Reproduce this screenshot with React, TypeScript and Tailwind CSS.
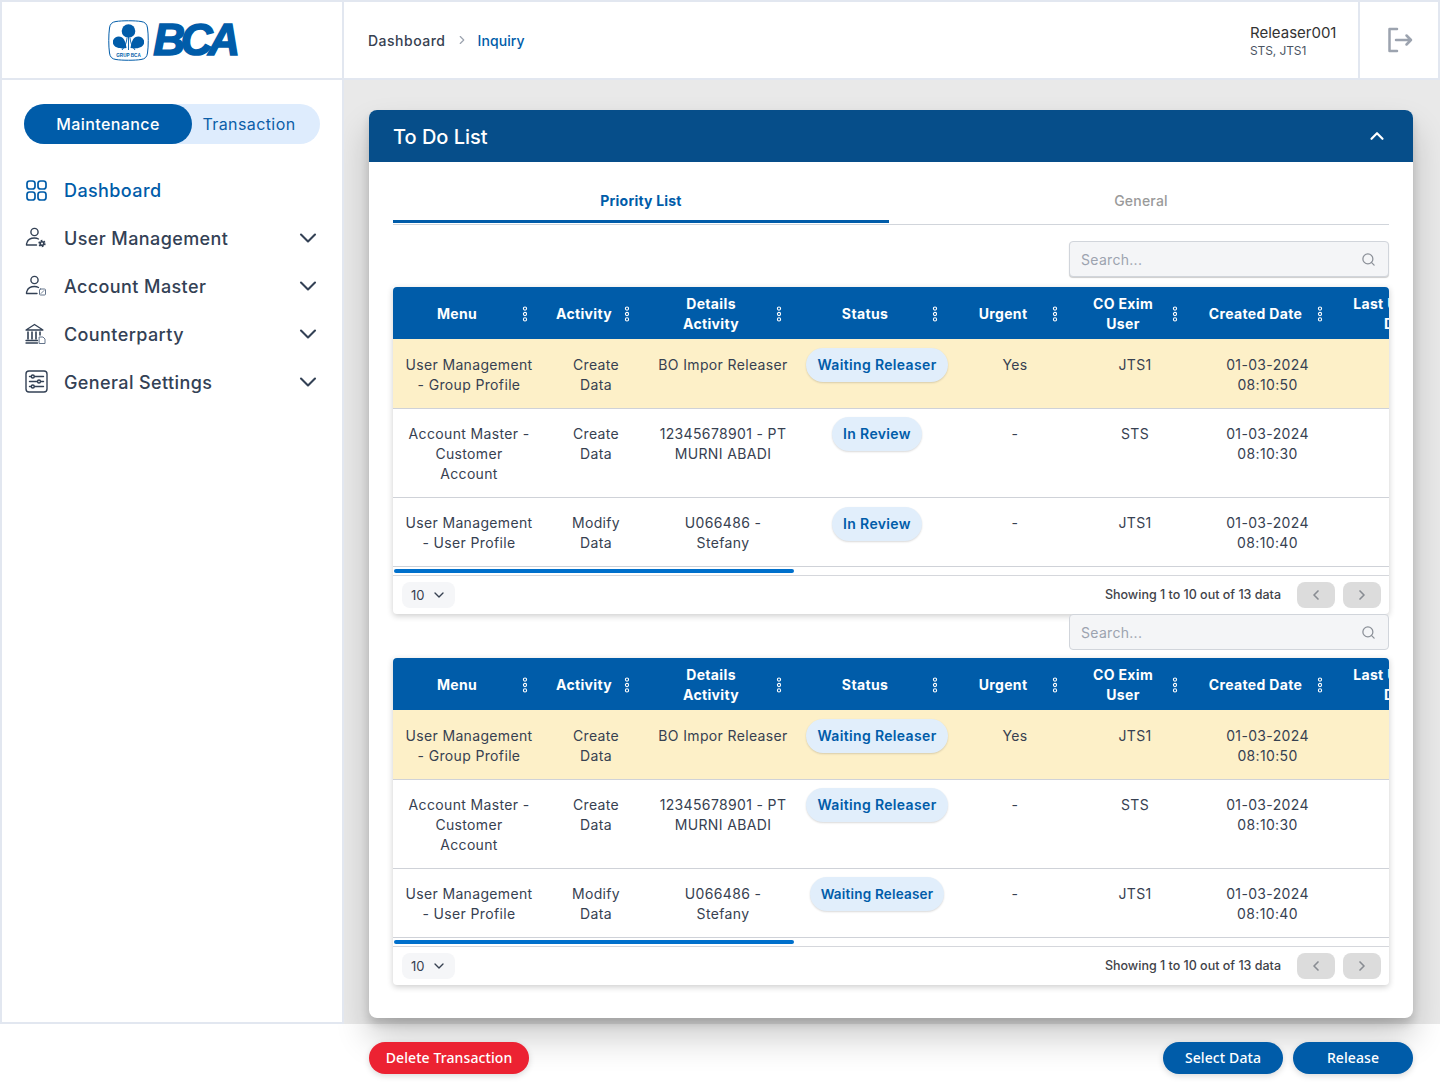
import { ChevronDown, ChevronLeft, ChevronRight, ChevronUp, Search } from "lucide-react";

const navItems = [
  { label: "User Management", icon: "user" },
  { label: "Account Master", icon: "account" },
  { label: "Counterparty", icon: "bank" },
  { label: "General Settings", icon: "settings" },
];

const columns = [
  { label: "Menu", width: "w-[152px]", inset: "" },
  { label: "Activity", width: "w-[102px]", inset: "" },
  { label: "Details Activity", width: "w-[152px]", inset: "px-6" },
  { label: "Status", width: "w-[156px]", inset: "" },
  { label: "Urgent", width: "w-[120px]", inset: "" },
  { label: "CO Exim User", width: "w-[120px]", inset: "" },
  { label: "Created Date", width: "w-[145px]", inset: "" },
  { label: "Last Updated Date", width: "w-[145px]", inset: "" },
];

const priorityRows = [
  { menu: "User Management - Group Profile", activity: "Create Data", details: "BO Impor Releaser", status: "Waiting Releaser", urgent: "Yes", user: "JTS1", date: "01-03-2024 08:10:50", highlight: true, tight: false },
  { menu: "Account Master - Customer Account", activity: "Create Data", details: "12345678901 - PT MURNI ABADI", status: "In Review", urgent: "-", user: "STS", date: "01-03-2024 08:10:30", highlight: false, tight: false },
  { menu: "User Management - User Profile", activity: "Modify Data", details: "U066486 - Stefany", status: "In Review", urgent: "-", user: "JTS1", date: "01-03-2024 08:10:40", highlight: false, tight: false },
];

const waitingRows = priorityRows.map((row, i) => ({ ...row, status: "Waiting Releaser", tight: i === 2 }));

function Logo() {
  return (
    <div className="flex items-center gap-[4px]">
      <svg width="41" height="41" viewBox="0 0 41 41" fill="none">
        <path d="M8 1.5 C14 0.5 27 0.5 33 1.5 C37 2 39 4 39.5 8 C40.5 15 40.5 26 39.5 33 C39 37 37 39 33 39.5 C27 40.5 14 40.5 8 39.5 C4 39 2 37 1.5 33 C0.5 26 0.5 15 1.5 8 C2 4 4 2 8 1.5 Z" stroke="#005ca9" strokeWidth="1" />
        <circle cx="20.5" cy="11" r="6.8" fill="#005ca9" />
        <path d="M5 20.5 C7 15 14 15.5 16 19.5 C17.5 22 18 25 18.5 28 C14 29 6.5 28.5 5 23.5 Z" fill="#005ca9" />
        <path d="M36 20.5 C34 15 27 15.5 25 19.5 C23.5 22 23 25 22.5 28 C27 29 34.5 28.5 36 23.5 Z" fill="#005ca9" />
        <path d="M20.5 17 V30 M19 18 C18.5 22 17.5 26 14 30 M22 18 C22.5 22 23.5 26 27 30" stroke="#005ca9" strokeWidth="0.9" />
        <text x="20.5" y="36.5" textAnchor="middle" fontSize="4.6" fontWeight="700" fill="#005ca9" fontFamily="'Liberation Sans', sans-serif">GRUP BCA</text>
      </svg>
      <span className="font-['Liberation_Sans',sans-serif] text-[44px] font-bold italic leading-none tracking-[-4.2px] text-[#005ca9] [-webkit-text-stroke:1.6px_#005ca9]">
        BCA
      </span>
    </div>
  );
}

function NavIcon({ name }: { name: string }) {
  if (name === "user") {
    return (
      <svg width="24" height="24" viewBox="0 0 24 24" fill="none" stroke="#334155" strokeWidth="1.4" strokeLinecap="round">
        <circle cx="9.5" cy="6" r="3.6" />
        <path d="M1.5 19 C1.5 18.5 1.5 17.5 2 16.5 C3 13.5 6.5 12 9.5 12 C11 12 12.5 12.4 13.5 13 M1.5 19 H11.5" />
        <circle cx="17" cy="17.5" r="2.6" fill="#334155" strokeWidth="2.2" strokeDasharray="1.5 1.2" strokeLinecap="butt" />
        <circle cx="17" cy="17.5" r="1" fill="#fff" stroke="none" />
      </svg>
    );
  }
  if (name === "account") {
    return (
      <svg width="24" height="24" viewBox="0 0 24 24" fill="none" stroke="#334155" strokeWidth="1.4" strokeLinecap="round">
        <circle cx="9.5" cy="6" r="3.6" />
        <path d="M1.5 19.5 C1.5 19 1.5 18 2 17 C3 14 6.5 12.5 9.5 12.5 C11 12.5 12.5 12.9 13.5 13.5 M1.5 19.5 H12" />
        <rect x="14.5" y="15" width="6" height="6" rx="1" strokeWidth="1" stroke="#64748b" />
        <path d="M16 19.5 L19 16.5" strokeWidth="0.9" stroke="#64748b" />
      </svg>
    );
  }
  if (name === "bank") {
    return (
      <svg width="24" height="24" viewBox="0 0 24 24" fill="none" stroke="#334155" strokeWidth="1.3" strokeLinecap="round" strokeLinejoin="round">
        <path d="M1 8 L9.5 2.5 L18 8 Z" />
        <path d="M3 10 V17 M7 10 V17 M11 10 V17 M15 10 V13" strokeWidth="1.6" />
        <path d="M1 18.5 H12.5 M1 21 H12.5" />
        <path d="M14.5 15 H18 L20 17 V21.5 H14.5 Z" strokeWidth="1" stroke="#64748b" />
      </svg>
    );
  }
  return (
    <svg width="24" height="24" viewBox="0 0 24 24" fill="none" stroke="#334155" strokeWidth="1.4" strokeLinecap="round">
      <rect x="1" y="1" width="21" height="21" rx="3" />
      <path d="M4.5 6.5 H6 M9.5 6.5 H18.5 M4.5 11.5 H12 M16 11.5 H18.5 M4.5 16.5 H6 M9.5 16.5 H18.5" />
      <circle cx="7.8" cy="6.5" r="1.5" />
      <circle cx="14" cy="11.5" r="1.5" />
      <circle cx="7.8" cy="16.5" r="1.5" />
    </svg>
  );
}

function Dots() {
  return (
    <svg width="8" height="16" viewBox="0 0 8 16" fill="none" stroke="#fff" strokeWidth="1.1" className="shrink-0">
      <circle cx="4" cy="2.6" r="1.6" />
      <circle cx="4" cy="8" r="1.6" />
      <circle cx="4" cy="13.4" r="1.6" />
    </svg>
  );
}

function SearchBox({ raised }: { raised?: boolean }) {
  return (
    <div className={`flex h-9 w-[320px] items-center justify-between rounded border border-[#d1d5db] bg-[#f4f5f7] pl-[11px] pr-3 pt-px text-[14px] tracking-[0.3px] text-[#9ca3af] ${raised ? "shadow-[0_1px_1px_rgba(0,0,0,0.2)]" : ""}`}>
      Search...
      <Search size={15} strokeWidth={2} className="text-[#8b9098]" />
    </div>
  );
}

function DataTable({ rows }: { rows: typeof priorityRows }) {
  return (
    <div className="w-[996px] rounded-b bg-white shadow-[0_2px_6px_rgba(0,0,0,0.2)]">
      <div className="overflow-hidden rounded-t">
        <table className="w-[1092px] table-fixed border-collapse text-center text-[14px] leading-5 tracking-[0.35px] text-[#374151]">
          <thead>
            <tr className="h-[52px] bg-[#005ca9] text-white">
              {columns.map((col) => (
                <th key={col.label} className={`${col.width} p-0 pt-[2px] font-bold`}>
                  <div className="flex items-center pr-4">
                    <span className={`flex-1 text-center ${col.inset}`}>{col.label}</span>
                    <Dots />
                  </div>
                </th>
              ))}
            </tr>
          </thead>
          <tbody>
            {rows.map((row, i) => (
              <tr key={row.menu} className={`border-b border-[#cfd2d8] align-top ${row.highlight ? "bg-[#fdf0c8]" : ""}`}>
                <td className={`px-3 pb-[13px] ${i === 0 ? "pt-4" : "pt-[15px]"}`}>{row.menu}</td>
                <td className={`px-6 pb-[13px] ${i === 0 ? "pt-4" : "pt-[15px]"}`}>{row.activity}</td>
                <td className={`px-[11px] pb-[13px] ${i === 0 ? "pt-4" : "pt-[15px]"}`}>{row.details}</td>
                <td className={i === 1 || row.tight ? "pt-2" : "pt-[9px]"}>
                  <span className={`inline-block h-[34px] rounded-full bg-[#e1eefb] font-semibold leading-[34px] text-[#005ca9] shadow-[0_1px_2px_rgba(0,0,0,0.15)] ${row.tight ? "px-[11px] text-[13.5px] tracking-[0.2px]" : "px-[11px]"}`}>
                    {row.status}
                  </span>
                </td>
                <td className={i === 0 ? "pt-4" : "pt-[15px]"}>{row.urgent}</td>
                <td className={i === 0 ? "pt-4" : "pt-[15px]"}>{row.user}</td>
                <td className={`px-6 ${i === 0 ? "pt-4" : "pt-[15px]"}`}>{row.date}</td>
                <td />
              </tr>
            ))}
          </tbody>
        </table>
      </div>
      <div className="h-[9px] border-b border-[#d5d7dc] pl-px pt-[2px]">
        <div className="h-1 w-[400px] rounded-full bg-[#0070cc]" />
      </div>
      <div className="flex h-[38px] items-start justify-between pl-[9px] pr-2 pt-[6px]">
        <div className="flex h-[26px] w-[53px] items-center gap-[6px] rounded-lg bg-[#f5f6f8] pl-[9px] text-[13px] text-[#374151]">
          <span className="pt-px">10</span>
          <ChevronDown size={16} />
        </div>
        <div className="flex items-center">
          <span className="mr-4 pt-px text-[12.5px] font-medium text-[#3f4349]">Showing 1 to 10 out of 13 data</span>
          <div className="flex h-[26px] w-[38px] items-center justify-center rounded-lg bg-[#dcdcdc] text-[#888c92]">
            <ChevronLeft size={16} strokeWidth={2.5} />
          </div>
          <div className="ml-2 flex h-[26px] w-[38px] items-center justify-center rounded-lg bg-[#dcdcdc] text-[#888c92]">
            <ChevronRight size={16} strokeWidth={2.5} />
          </div>
        </div>
      </div>
    </div>
  );
}

export default function App() {
  return (
    <div className="flex h-[1084px] w-[1440px] flex-col overflow-hidden bg-white font-['Inter',sans-serif]">
      {/* Top bar */}
      <header className="flex h-20 shrink-0 border-2 border-[#e2e7f0] bg-white">
        <div className="flex w-[342px] items-center justify-center border-r-2 border-[#e2e7f0]">
          <Logo />
        </div>
        <div className="flex flex-1 items-center pl-6 text-[14px]">
          <span className="font-medium tracking-[0.5px] text-[#374151]">Dashboard</span>
          <ChevronRight size={14} className="mx-[9px] text-[#9ca3af]" />
          <span className="font-medium tracking-[0.1px] text-[#005ca9]">Inquiry</span>
        </div>
        <div className="flex w-[108px] flex-col justify-center pt-px text-[#333]">
          <span className="text-[15px] leading-5">Releaser001</span>
          <span className="text-[12px] leading-4 tracking-[-0.1px] text-[#4b5563]">STS, JTS1</span>
        </div>
        <div className="flex w-[80px] items-center justify-center border-l-2 border-[#e2e7f0] pl-[2px]">
          <svg width="26" height="26" viewBox="0 0 26 26" fill="none" stroke="#9ca3af" strokeWidth="2.5" strokeLinecap="round" strokeLinejoin="round">
            <path d="M10 2 H2.5 V24 H10" />
            <path d="M9 13 H24 M19.5 8.5 L24 13 L19.5 17.5" />
          </svg>
        </div>
      </header>

      <div className="flex h-[944px] shrink-0">
        {/* Sidebar */}
        <aside className="relative z-20 w-[344px] shrink-0 border-x-2 border-b-2 border-[#e2e7f0] bg-white pl-[22px] pr-[24px] pt-6">
          <div className="flex h-10 w-[296px] rounded-full bg-[#deecfd] text-[16px] tracking-[0.4px]">
            <div className="flex w-[168px] items-center justify-center rounded-full bg-[#005ca9] font-medium text-white">Maintenance</div>
            <div className="flex flex-1 items-center justify-center pr-[14px] text-[#0b5ea8]">Transaction</div>
          </div>
          <nav className="mt-[22px] flex flex-col">
            <a className="flex h-12 items-center gap-[17px] pl-[2px] text-[18px] font-medium tracking-[0.4px] text-[#005ca9]">
              <svg width="21" height="21" viewBox="0 0 21 21" fill="none" stroke="#005ca9" strokeWidth="1.7">
                <rect x="1" y="1" width="8" height="8" rx="2.6" />
                <rect x="12" y="1" width="8" height="8" rx="2.6" />
                <rect x="1" y="12" width="8" height="8" rx="2.6" />
                <rect x="12" y="12" width="8" height="8" rx="2.6" />
              </svg>
              <span className="pt-px">Dashboard</span>
            </a>
            {navItems.map((item) => (
              <a key={item.label} className="flex h-12 items-center gap-[15px] pl-px text-[18px] font-medium tracking-[0.4px] text-[#334155]">
                <NavIcon name={item.icon} />
                <span className="flex-1 pt-px">{item.label}</span>
                <ChevronDown size={28} strokeWidth={1.8} className="-mr-1" />
              </a>
            ))}
          </nav>
        </aside>

        {/* Content */}
        <main className="flex-1 bg-[#e9e9e9] pl-[25px] pt-[30px]">
          <section className="relative z-10 h-[908px] w-[1044px] rounded-lg bg-white shadow-[0_6px_8px_rgba(0,0,0,0.14),0_20px_34px_rgba(0,0,0,0.2)]">
            <div className="flex h-[52px] items-center justify-between rounded-t-lg bg-[#064e8a] pl-6 pr-[25px] text-white">
              <span className="pt-[2px] text-[20px] font-medium">To Do List</span>
              <ChevronUp size={22} strokeWidth={2.4} />
            </div>
            <div className="px-6">
              <div className="flex h-[63px] border-b border-[#d1d5db] text-[14px] tracking-[0.2px]">
                <div className="h-[61px] w-[496px] border-b-[3px] border-[#005ca9] pt-[29px] text-center font-bold leading-5 text-[#005ca9]">
                  Priority List
                </div>
                <div className="flex-1 pl-1 pt-[29px] text-center font-medium leading-5 text-[#9a9a9a]">General</div>
              </div>
              <div className="mt-4 flex justify-end">
                <SearchBox raised />
              </div>
              <div className="mt-[10px]">
                <DataTable rows={priorityRows} />
              </div>
              <div className="flex justify-end">
                <SearchBox />
              </div>
              <div className="mt-2">
                <DataTable rows={waitingRows} />
              </div>
            </div>
          </section>
        </main>
      </div>

      {/* Actions */}
      <footer className="flex flex-1 items-start justify-between pl-[369px] pr-[27px] pt-[18px] font-['Noto_Sans',sans-serif] text-[14px] font-medium tracking-[0.1px] text-white">
        <button className="relative z-20 h-8 w-40 rounded-full bg-[#ec2232] pb-px shadow-[0_2px_6px_rgba(0,0,0,0.15)]">Delete Transaction</button>
        <div className="relative z-20 flex gap-[10px]">
          <button className="h-8 w-[120px] rounded-full bg-[#005ca9] pb-px shadow-[0_2px_6px_rgba(0,0,0,0.15)]">Select Data</button>
          <button className="h-8 w-[120px] rounded-full bg-[#005ca9] pb-px shadow-[0_2px_6px_rgba(0,0,0,0.15)]">Release</button>
        </div>
      </footer>
    </div>
  );
}
